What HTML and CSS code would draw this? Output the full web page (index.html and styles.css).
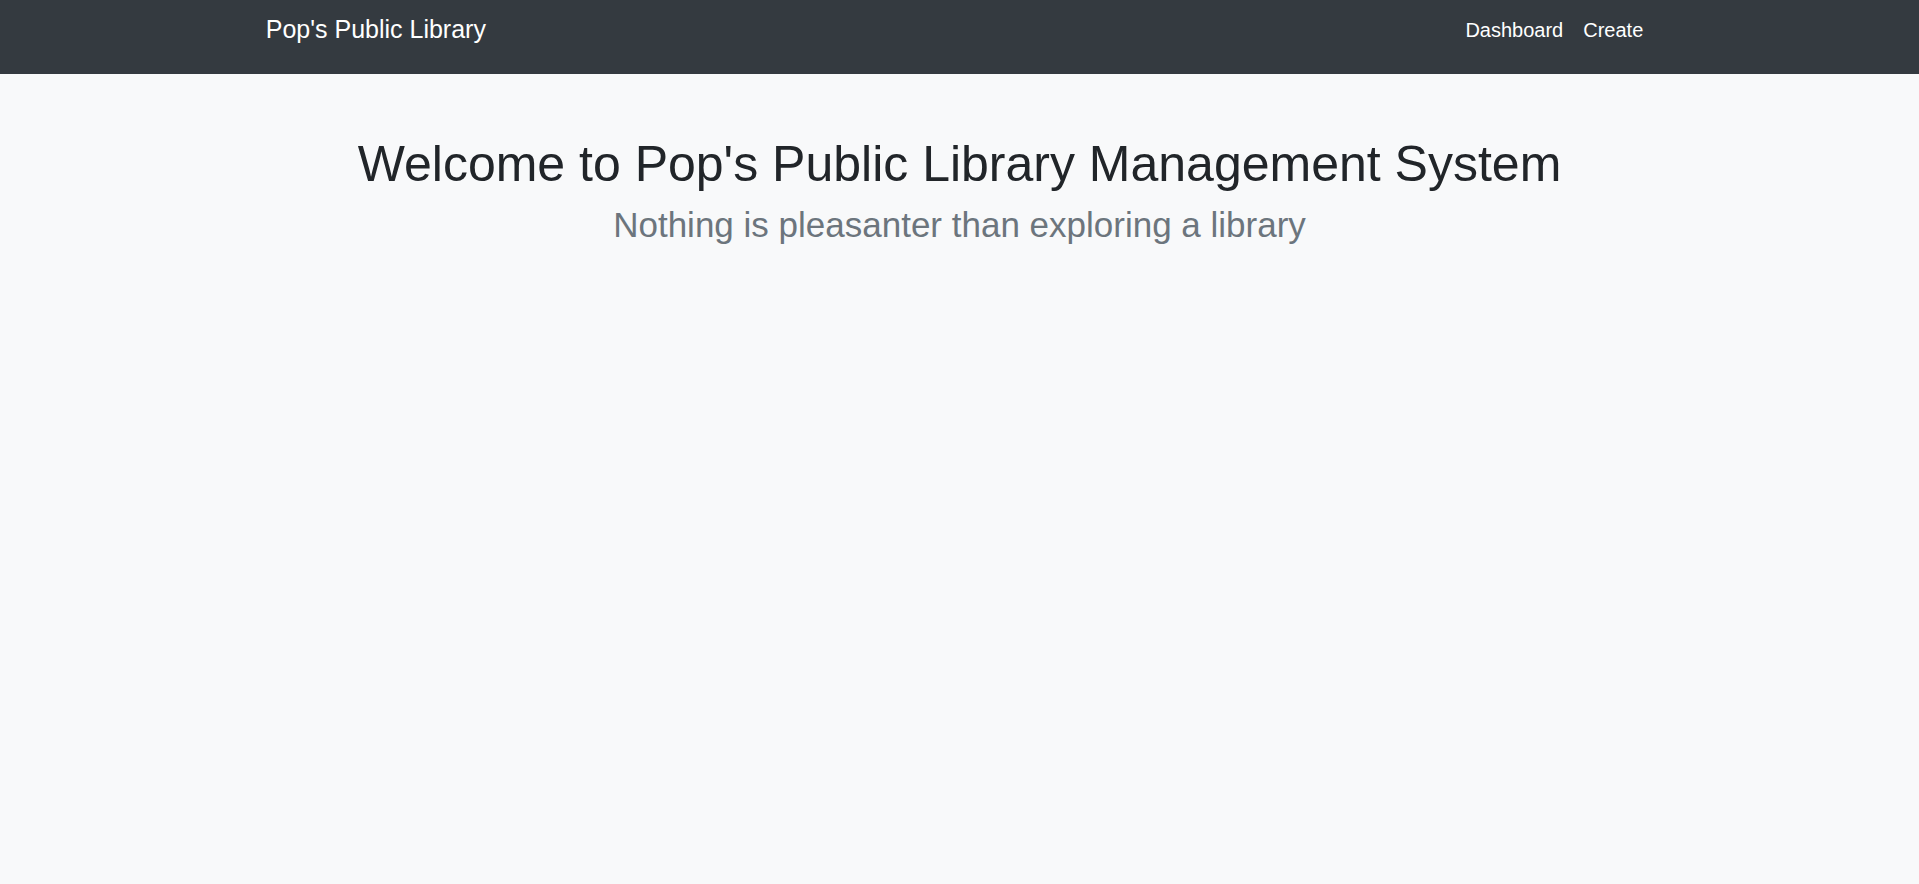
FILE: index.html
```html
<!DOCTYPE html>
<html lang="en">
<head>
<meta charset="utf-8">
<title>Pop's Public Library</title>
<link rel="stylesheet" href="styles.css">
</head>
<body>
<nav class="navbar">
  <div class="container nav-inner">
    <a class="brand" href="#">Pop's Public Library</a>
    <ul class="nav-links">
      <li><a class="nav-link" href="#">Dashboard</a></li>
      <li><a class="nav-link" href="#">Create</a></li>
    </ul>
  </div>
</nav>
<main class="container hero">
  <h1 class="title">Welcome to Pop's Public Library Management System</h1>
  <h3 class="subtitle">Nothing is pleasanter than exploring a library</h3>
</main>
</body>
</html>
```

FILE: styles.css
```css
* { box-sizing: border-box; }
html, body {
  margin: 0;
  padding: 0;
  height: 100%;
}
body {
  background: #f8f9fa;
  font-family: "Liberation Sans", Arial, sans-serif;
  color: #212529;
}
.container {
  width: 1425px;
  margin: 0 auto;
  padding: 0 18.75px;
}
.navbar {
  background: #343a40;
  height: 74px;
}
.nav-inner {
  display: flex;
  justify-content: space-between;
  align-items: flex-start;
  height: 74px;
}
.brand {
  color: #fff;
  text-decoration: none;
  font-size: 25px;
  line-height: 25px;
  margin-top: 17px;
}
.nav-links {
  display: flex;
  list-style: none;
  margin: 20px 0 0 0;
  padding: 0;
}
.nav-link {
  display: block;
  color: #fff;
  text-decoration: none;
  font-size: 20px;
  line-height: 20px;
  padding: 0 10px;
}
.hero {
  text-align: center;
  padding-top: 60px;
}
.title {
  margin: 0 0 10px;
  font-size: 50px;
  line-height: 60px;
  font-weight: 400;
  color: #212529;
}
.subtitle {
  margin: 0;
  font-size: 35px;
  line-height: 42px;
  font-weight: 400;
  color: #6c757d;
}
```
